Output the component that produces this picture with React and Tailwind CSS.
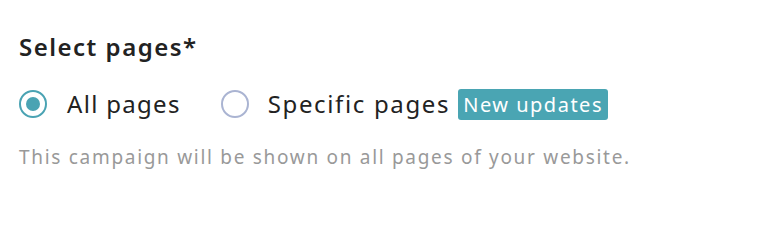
export default function App() {
  return (
    <div className="w-[762px] h-[232px] bg-white pl-[19px] pt-[30px]" style={{ fontFamily: '"Noto Sans", sans-serif' }}>
      <div className="text-[24px] font-semibold text-[#222] leading-[34px] tracking-[1.5px]">Select pages*</div>
      <div className="flex items-center mt-[24px] h-[32px]">
        <label className="flex items-center">
          <span className="w-[28px] h-[28px] rounded-full border-2 border-[#4aa3b3] flex items-center justify-center">
            <span className="w-[14px] h-[14px] rounded-full bg-[#4aa3b3]" />
          </span>
          <span className="ml-[20px] text-[24px] text-[#222] tracking-[1.3px]">All pages</span>
        </label>
        <label className="flex items-center ml-[40px]">
          <span className="w-[28px] h-[28px] rounded-full border-2 border-[#aab4d2]" />
          <span className="ml-[19px] text-[24px] text-[#222] tracking-[1.65px]">Specific pages</span>
          <span className="ml-[8px] bg-[#4aa5b3] text-white text-[20px] leading-[31px] px-[5px] rounded-[3px] tracking-[1.5px]">New updates</span>
        </label>
      </div>
      <div className="mt-[25px] text-[19px] text-[#999] leading-[24px] tracking-[1.7px]">This campaign will be shown on all pages of your website.</div>
    </div>
  );
}
